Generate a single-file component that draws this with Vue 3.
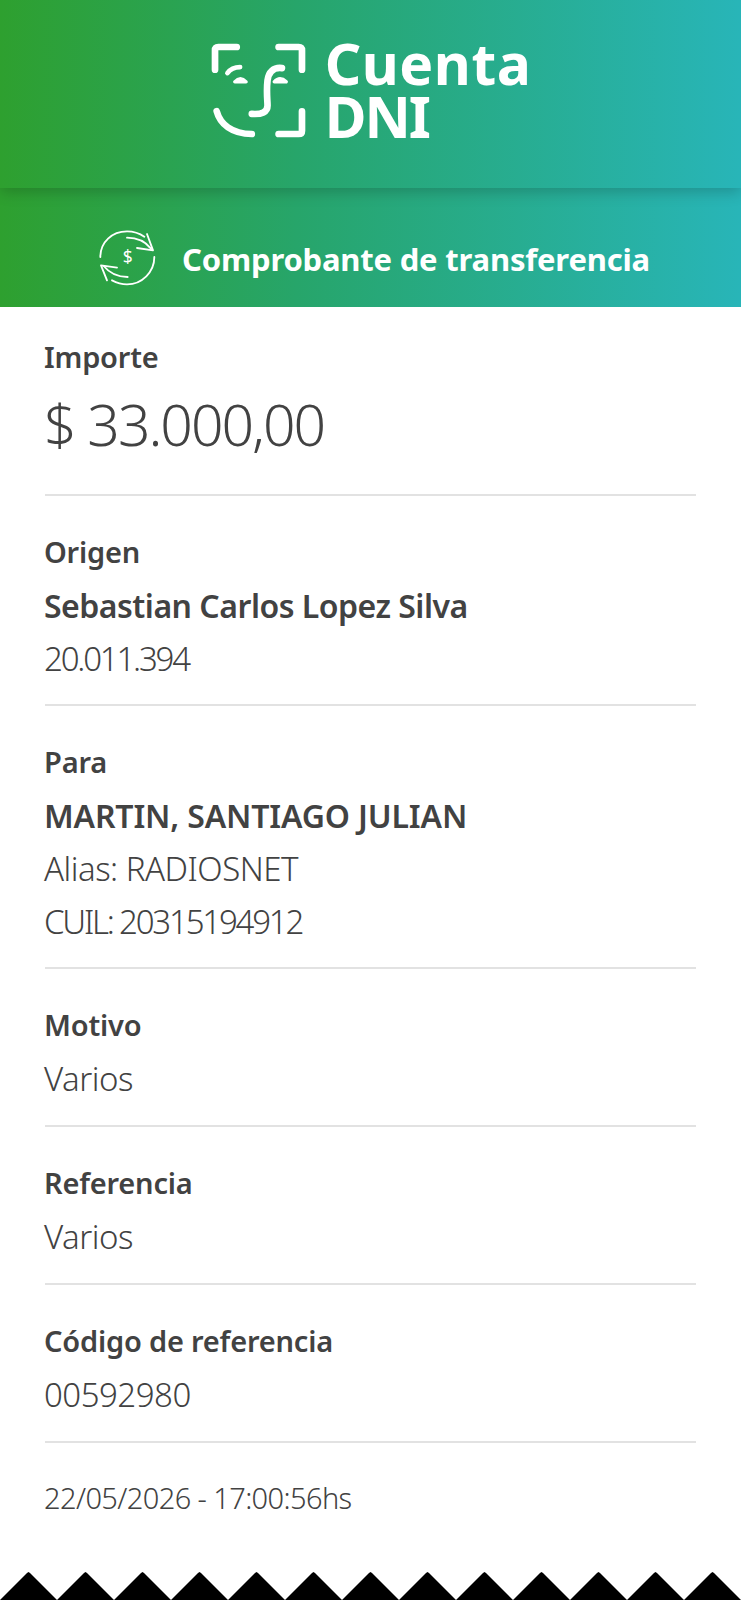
<template>
  <div class="receipt">
    <header class="top">
      <div class="brand">
        <svg class="face" viewBox="60 65 290 290" fill="none" stroke="#fff" stroke-width="20" stroke-linecap="round" stroke-linejoin="round">
          <path d="M140 80H85Q75 80 75 90V148" />
          <path d="M265 80H325Q335 80 335 90V148" />
          <path d="M335 272V330Q335 340 325 340H265" />
          <path d="M80 272C90 310 125 340 185 340" />
          <path d="M112 158Q125 140 150 140" stroke-width="14" />
          <path d="M134 184Q151 166 168 184Z" fill="#fff" stroke-width="10" />
          <path d="M252 184Q269 166 288 184Z" fill="#fff" stroke-width="10" />
          <path d="M275 143C250 140 235 155 232 180C228 215 232 240 232 255C232 275 215 282 185 280" stroke-width="20" />
        </svg>
        <div class="brand-name">
          <span class="word-a">Cuenta</span>
          <span class="word-b">DNI</span>
        </div>
      </div>
    </header>
    <div class="band">
      <svg class="swap" viewBox="50 175 180 180" fill="none" stroke="#fff" stroke-width="5.5" stroke-linecap="round" stroke-linejoin="round">
        <path d="M60 265C60 220 95 188 140 188C160 188 178 194 192 204" />
        <path d="M222 265C222 310 185 347 140 347C122 347 108 342 95 335" />
        <path d="M140 207C170 207 195 218 212 240" />
        <path d="M200 196L218 245L170 238" />
        <path d="M142 325C112 325 88 314 70 292" />
        <path d="M80 335L62 290L110 297" />
        <text x="142" y="284" class="dollar">$</text>
      </svg>
      <span class="band-title">Comprobante de transferencia</span>
    </div>
    <main class="body">
      <section
        v-for="(block, i) in blocks"
        :key="i"
        class="block"
        :class="{ first: i === 0, short: i > 0 && block.length === 2 }"
      >
        <p v-for="(row, j) in block" :key="j" :class="row.kind">{{ row.text }}</p>
      </section>
      <p class="stamp">22/05/2026 - 17:00:56hs</p>
    </main>
    <svg class="teeth" viewBox="0 0 741 29">
      <polygon :points="teethPoints" fill="#000" />
    </svg>
  </div>
</template>

<script setup>
const blocks = [
  [
    { kind: 'label', text: 'Importe' },
    { kind: 'amount', text: '$ 33.000,00' }
  ],
  [
    { kind: 'label', text: 'Origen' },
    { kind: 'strong', text: 'Sebastian Carlos Lopez Silva' },
    { kind: 'value digits', text: '20.011.394' }
  ],
  [
    { kind: 'label', text: 'Para' },
    { kind: 'strong caps', text: 'MARTIN, SANTIAGO JULIAN' },
    { kind: 'value', text: 'Alias: RADIOSNET' },
    { kind: 'value digits', text: 'CUIL: 20315194912' }
  ],
  [
    { kind: 'label', text: 'Motivo' },
    { kind: 'value', text: 'Varios' }
  ],
  [
    { kind: 'label', text: 'Referencia' },
    { kind: 'value', text: 'Varios' }
  ],
  [
    { kind: 'label', text: 'Código de referencia' },
    { kind: 'value', text: '00592980' }
  ]
]

// saw edge along the bottom, one tooth every 57px
let pts = '0,29 '
for (let x = 0; x < 741; x += 57) {
  pts += `${x + 27},2 ${x + 28.5},1 ${x + 30},2 ${x + 57},29 `
}
const teethPoints = pts
</script>

<style>
html,
body {
  margin: 0;
  background: #fff;
}
</style>

<style scoped>
.receipt {
  width: 741px;
  height: 1600px;
  display: flex;
  flex-direction: column;
  font-family: 'Noto Sans', sans-serif;
  color: #424242;
  background: #fff;
  overflow: hidden;
}

.top {
  height: 180px;
  padding-bottom: 8px;
  display: flex;
  align-items: center;
  justify-content: center;
  background: linear-gradient(90deg, #2ea02f 0%, #27a56a 40%, #28b5b8 100%);
  box-shadow: 0 4px 14px rgba(0, 0, 0, 0.2);
  position: relative;
  z-index: 1;
}

.brand {
  display: flex;
  align-items: center;
  gap: 18px;
}

.face {
  width: 97px;
  height: 97px;
}

.brand-name {
  display: flex;
  flex-direction: column;
  font-size: 57px;
  line-height: 53px;
  font-weight: 700;
  color: #fff;
}

.word-a {
  letter-spacing: 0.5px;
}

.word-b {
  letter-spacing: -2px;
}

.band {
  height: 97px;
  padding: 22px 0 0 6px;
  display: flex;
  align-items: center;
  justify-content: center;
  gap: 25px;
  background: linear-gradient(90deg, #2ea02f 0%, #27a56a 40%, #28b5b8 100%);
}

.swap {
  width: 60px;
  height: 60px;
  margin-top: -4px;
}

.dollar {
  font-size: 52px;
  font-family: 'Noto Sans', sans-serif;
  fill: #fff;
  stroke: none;
  text-anchor: middle;
}

.band-title {
  font-size: 31px;
  font-weight: 700;
  color: #fff;
  letter-spacing: -0.2px;
}

.body {
  flex: 1;
  padding: 0 45px;
}

.block {
  padding: 29px 0 19px;
  border-bottom: 2px solid #e2e2e2;
}

.block.first {
  padding: 23px 0 30px;
}

.block.short {
  padding-bottom: 20px;
}

.block p,
.stamp {
  margin: 0 0 0 -1px;
}

.label,
.strong {
  font-size: 29px;
  line-height: 54px;
  font-weight: 600;
  letter-spacing: -0.2px;
}

.strong {
  font-size: 32px;
  line-height: 53px;
  letter-spacing: -0.5px;
}

.strong.caps {
  letter-spacing: -0.15px;
}

.value {
  font-size: 33px;
  line-height: 53px;
  font-weight: 300;
  letter-spacing: -0.5px;
}

.value.digits {
  letter-spacing: -2.2px;
}

.amount {
  font-size: 57px;
  line-height: 80px;
  font-weight: 300;
  letter-spacing: -2px;
}

.stamp {
  margin-top: 30px;
  font-size: 29px;
  line-height: 50px;
  font-weight: 300;
  letter-spacing: -0.6px;
}

.teeth {
  width: 741px;
  height: 29px;
  display: block;
}
</style>
